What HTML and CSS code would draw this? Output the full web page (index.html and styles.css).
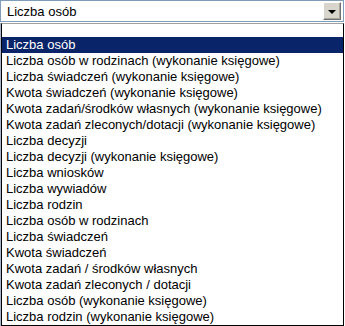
FILE: index.html
```html
<!DOCTYPE html>
<html lang="pl">
<head>
    <meta charset="UTF-8">
    <title>Lista wskaźników</title>
    <link rel="stylesheet" href="styles.css">
</head>
<body>

<div class="combo">
    <span class="combo-value">Liczba osób</span>
    <span class="combo-button"><span class="arrow"></span></span>
</div>

<div class="dropdown">
    <ul class="list">
        <li class="blank"></li>
        <li class="selected">Liczba osób</li>
        <li>Liczba osób w rodzinach (wykonanie księgowe)</li>
        <li>Liczba świadczeń (wykonanie księgowe)</li>
        <li>Kwota świadczeń (wykonanie księgowe)</li>
        <li>Kwota zadań/środków własnych (wykonanie księgowe)</li>
        <li>Kwota zadań zleconych/dotacji (wykonanie księgowe)</li>
        <li>Liczba decyzji</li>
        <li>Liczba decyzji (wykonanie księgowe)</li>
        <li>Liczba wniosków</li>
        <li>Liczba wywiadów</li>
        <li>Liczba rodzin</li>
        <li>Liczba osób w rodzinach</li>
        <li>Liczba świadczeń</li>
        <li>Kwota świadczeń</li>
        <li>Kwota zadań / środków własnych</li>
        <li>Kwota zadań zleconych / dotacji</li>
        <li>Liczba osób (wykonanie księgowe)</li>
        <li>Liczba rodzin (wykonanie księgowe)</li>
    </ul>
</div>

</body>
</html>
```

FILE: styles.css
```css
body {
    margin: 0;
    background: #fff;
    font-family: "Liberation Sans", Arial, sans-serif;
    font-size: 13px;
    color: #000;
}
.combo {
    display: flex;
    align-items: center;
    width: 344px;
    height: 22px;
    box-sizing: border-box;
    border: 1px solid #7f9db9;
    padding: 1px;
}
.combo-value {
    flex: 1;
    padding-left: 5px;
}
.combo-button {
    display: flex;
    align-items: center;
    justify-content: center;
    width: 18px;
    height: 18px;
    margin-right: 1px;
    box-sizing: border-box;
    background: #d8d5cd;
    border: 1px solid;
    border-color: #fff #6f6f6f #6f6f6f #fff;
    box-shadow: inset -1px -1px 0 #aaa79f;
}
.arrow {
    width: 0;
    height: 0;
    border-left: 4px solid transparent;
    border-right: 4px solid transparent;
    border-top: 4px solid #000;
    margin-top: 1px;
}
.dropdown {
    margin-top: 1px;
    border-left: 1px solid #a7b6cb;
    width: 344px;
    box-sizing: border-box;
}
.list {
    list-style: none;
    margin: 0;
    padding: 0;
    width: 343px;
    box-sizing: border-box;
    border: 1px solid #000;
    border-top-color: #a0a0a0;
}
.list li {
    height: 16px;
    line-height: 16px;
    padding-left: 4px;
    white-space: nowrap;
}
.list li.blank {
    height: 13px;
}
.list li.selected {
    background: #0a246a;
    color: #fff;
}
```
